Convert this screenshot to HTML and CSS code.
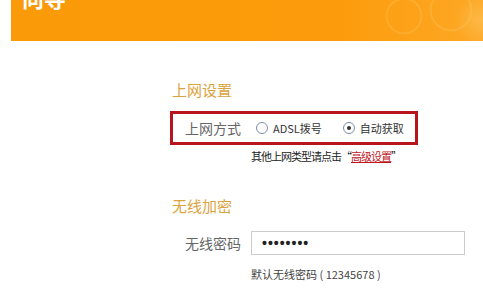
FILE: index.html
```html
<!DOCTYPE html>
<html lang="zh-CN">
<head>
    <meta charset="UTF-8">
    <title>设置向导</title>
    <link rel="stylesheet" href="styles.css">
</head>
<body>
    <!-- 顶部横幅 -->
    <div class="banner">
        <span class="banner-title">向导</span>
    </div>

    <div class="form">
        <h2 class="section-title">上网设置</h2>

        <div class="row row-mode">
            <span class="label">上网方式</span>
            <label class="radio"><span class="dot"></span>ADSL拨号</label>
            <label class="radio checked"><span class="dot"></span>自动获取</label>
        </div>
        <div class="hint">其他上网类型请点击“<a href="#">高级设置</a>”</div>

        <h2 class="section-title second">无线加密</h2>

        <div class="row">
            <span class="label">无线密码</span>
            <div class="input">••••••••</div>
        </div>
        <div class="hint small">默认无线密码 ( 12345678 )</div>
    </div>
</body>
</html>
```

FILE: styles.css
```css
body {
    margin: 0;
    background: #fff;
    font-family: "Noto Sans CJK SC", "Liberation Sans", sans-serif;
    overflow: hidden;
}
.banner {
    margin-left: 11px;
    height: 41px;
    overflow: hidden;
    background:
        radial-gradient(circle at 393px 16px, rgba(255,255,255,0) 16px, rgba(255,215,140,0.25) 17px, rgba(255,255,255,0) 19px),
        radial-gradient(circle at 440px 10px, rgba(255,255,255,0) 19px, rgba(255,215,140,0.25) 20px, rgba(255,255,255,0) 22px),
        radial-gradient(circle at 470px 20px, rgba(255,210,120,0.4) 0, rgba(255,255,255,0) 26px),
        linear-gradient(to right, #fb9a08 0%, #fc9c0c 70%, #fda826 100%);
}
.banner-title {
    display: block;
    margin: -16px 0 0 11px;
    color: #fff;
    font-size: 22px;
    font-weight: bold;
    line-height: 26px;
}
.form {
    margin-left: 170px;
    width: 300px;
}
.section-title {
    margin: 38px 0 0 2px;
    font-size: 15px;
    font-weight: normal;
    line-height: 22px;
    color: #dba33e;
}
.section-title.second {
    margin-top: 32px;
}
.row {
    display: flex;
    align-items: center;
    margin-top: 14px;
    font-size: 14px;
    color: #666;
}
.row .label {
    width: 66px;
    padding-left: 15px;
    flex-shrink: 0;
}
.row-mode {
    width: 242px;
    height: 28px;
    border: 3px solid #b8141c;
    margin-top: 10px;
}
.row-mode .label {
    padding-left: 12px;
    width: 71px;
}
.radio {
    display: flex;
    align-items: center;
    white-space: nowrap;
    font-size: 11px;
    color: #333;
    margin-right: 21px;
}
.radio .dot {
    width: 10px;
    height: 10px;
    border: 1px solid #7d8ea9;
    border-radius: 50%;
    margin-right: 5px;
    position: relative;
    background: #fff;
}
.radio.checked .dot::after {
    content: "";
    position: absolute;
    left: 3px;
    top: 3px;
    width: 4px;
    height: 4px;
    border-radius: 50%;
    background: #333;
}
.hint {
    margin: 4px 0 0 81px;
    font-size: 11px;
    letter-spacing: -1px;
    line-height: 14px;
    color: #222;
    white-space: nowrap;
}
.hint a {
    color: #c0171f;
}
.hint.small {
    margin-top: 12px;
    color: #444;
    letter-spacing: 0;
}
.input {
    width: 202px;
    height: 22px;
    border: 1px solid #ccc;
    padding-left: 10px;
    font-family: "Liberation Sans", sans-serif;
    font-size: 14px;
    font-weight: bold;
    letter-spacing: 1px;
    line-height: 22px;
    color: #222;
}
```
